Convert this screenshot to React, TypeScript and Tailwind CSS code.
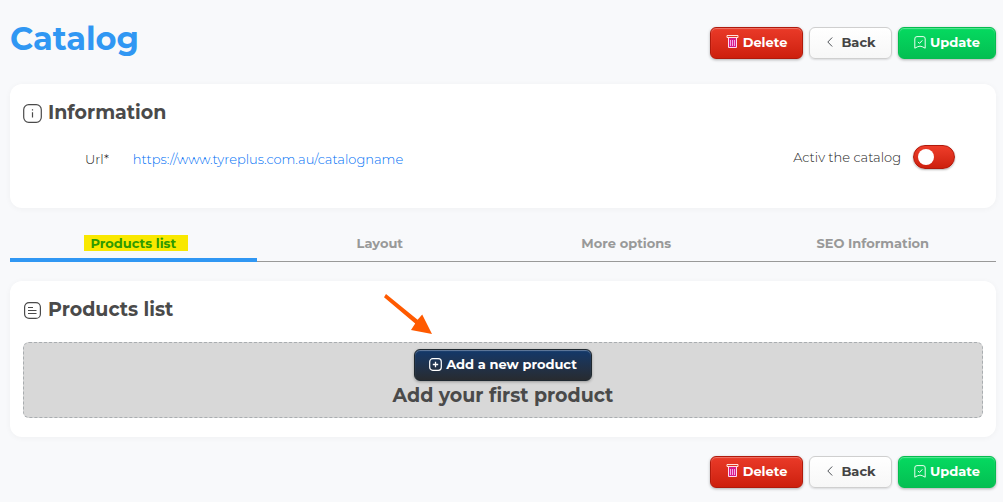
import React from 'react';

type IconProps = { className?: string };

const TrashIcon: React.FC<IconProps> = ({ className }) => (
  <svg viewBox="0 0 13 14" fill="none" className={className} aria-hidden="true">
    <path d="M2.5 3v9.5h8V3" fill="#d81b8c" stroke="#ffd9f2" />
    <path d="M1 .5h11v2H1z" stroke="#ffe3dc" />
    <path d="M4.5 5v6M6.5 5v6M8.5 5v6" stroke="#f6b8ee" strokeWidth=".9" />
  </svg>
);

const ChevronIcon: React.FC<IconProps> = ({ className }) => (
  <svg viewBox="0 0 6 10" fill="none" className={className} aria-hidden="true">
    <path d="M5.2.5.8 5l4.4 4.5" stroke="#4f5358" />
  </svg>
);

const BookmarkIcon: React.FC<IconProps> = ({ className }) => (
  <svg viewBox="0 0 12 13" fill="none" className={className} aria-hidden="true">
    <path
      d="M3 .6h6A2.2 2.2 0 0 1 11.2 3v9.2L8.5 10.8a5.3 5.3 0 0 0-5 0L.8 12.2V3A2.2 2.2 0 0 1 3 .6Z"
      stroke="#eaffef"
    />
    <path d="m4 5.9 1.5 1.5 2.8-3" stroke="#fff" />
  </svg>
);

const PlusIcon: React.FC<IconProps> = ({ className }) => (
  <svg viewBox="0 0 13 13" fill="none" stroke="#fff" className={className} aria-hidden="true">
    <rect x=".7" y=".7" width="11.6" height="11.6" rx="3" strokeWidth="1.2" />
    <path d="M6.5 3.8v5.4M3.8 6.5h5.4" strokeWidth="1.3" />
  </svg>
);

const InfoIcon: React.FC<IconProps> = ({ className }) => (
  <svg viewBox="0 0 19 19" fill="none" stroke="#4a4a4a" className={className} aria-hidden="true">
    <rect x=".7" y=".7" width="17.6" height="17.6" rx="5" strokeWidth="1.2" />
    <path d="M9.5 8.2v5.4M9.5 5.3v1.3" strokeWidth="1.2" />
  </svg>
);

const ListIcon: React.FC<IconProps> = ({ className }) => (
  <svg viewBox="0 0 19 19" fill="none" stroke="#4a4a4a" className={className} aria-hidden="true">
    <rect x="1.6" y="1.6" width="15.8" height="15.8" rx="4.5" strokeWidth="1.2" />
    <path d="M5 6.5h5M5 9.5h8.5M5 12.5h8.5" strokeWidth="1.1" />
  </svg>
);

const BUTTON =
  'flex h-8 cursor-pointer items-center justify-center gap-1 rounded-md border pb-0.5 text-[13px] leading-5 font-bold';

const Actions: React.FC = () => (
  <div className="flex shrink-0 gap-1.5">
    <button
      type="button"
      className={`${BUTTON} w-[93px] border-[#b01a0c] bg-linear-to-b from-[#ea3a28] to-[#cd1f0c] text-white shadow-[inset_0_1px_1px_rgba(255,255,255,0.3),0_1px_3px_rgba(0,0,0,0.3)]`}
    >
      <TrashIcon className="h-3.5 w-[13px]" />
      Delete
    </button>
    <button
      type="button"
      className={`${BUTTON} w-[83px] border-[#cfcfcf] bg-linear-to-b from-white to-[#f7f7f7] pl-0.5 text-[#444] shadow-[0_1px_2px_rgba(0,0,0,0.12)]`}
    >
      <ChevronIcon className="mr-1 h-2.5 w-1.5" />
      Back
    </button>
    <button
      type="button"
      className={`${BUTTON} w-[98px] border-[#05bd4f] bg-linear-to-b from-[#05da60] to-[#04bf52] text-white shadow-[inset_0_1px_1px_rgba(255,255,255,0.35),0_1px_3px_rgba(0,0,0,0.3)]`}
    >
      <BookmarkIcon className="h-[13px] w-3" />
      Update
    </button>
  </div>
);

const tabs = ['Products list', 'Layout', 'More options', 'SEO Information'];

const CARD = 'rounded-xl bg-white px-[13px] pt-4 shadow-[0_1px_6px_rgba(0,0,0,0.04)]';

const App: React.FC = () => {
  const [activeTab, setActiveTab] = React.useState(tabs[0]);
  const [active, setActive] = React.useState(false);

  return (
    <div className="min-h-screen bg-[#f8f9fb] pr-[7px] pb-3.5 pl-2.5 font-['Montserrat','Inter',sans-serif] text-[13px] leading-5 text-[#4a4a4a]">
      <header className="flex justify-between pt-[18px] pb-[25px]">
        <h1 className="text-[32px] leading-[41px] font-bold text-[#3097f3]">Catalog</h1>
        <div className="pt-[9px]">
          <Actions />
        </div>
      </header>

      <section className={`${CARD} pb-[39px]`}>
        <h2 className="flex items-center gap-1.5 text-[19px] leading-[26px] font-bold">
          <InfoIcon className="size-[19px]" />
          Information
        </h2>
        <div className="mt-[19px] flex h-6 justify-between pr-7 pl-[62px] font-light text-[#222]">
          <div className="flex items-end gap-6">
            <span>Url*</span>
            <a href="https://www.tyreplus.com.au/catalogname" className="text-[#0070f5]">
              https://www.tyreplus.com.au/catalogname
            </a>
          </div>
          <label className="flex items-center gap-3">
            Activ the catalog
            <input
              type="checkbox"
              role="switch"
              checked={active}
              onChange={(e) => setActive(e.target.checked)}
              className="flex h-6 w-[42px] cursor-pointer appearance-none items-center rounded-full border border-[#b01a0c] bg-linear-to-b from-[#ee3d2a] to-[#cd1f0c] px-1 shadow-[0_1px_2px_rgba(0,0,0,0.3)] before:size-4 before:rounded-full before:bg-white checked:justify-end checked:border-[#05bd4f] checked:from-[#05da60] checked:to-[#04bf52]"
            />
          </label>
        </div>
      </section>

      <div role="tablist" className="mt-4 grid grid-cols-4 border-b border-[#999]">
        {tabs.map((tab) => (
          <button
            key={tab}
            type="button"
            role="tab"
            aria-selected={tab === activeTab}
            onClick={() => setActiveTab(tab)}
            className={`-mb-px flex h-[38px] cursor-pointer items-center justify-center border-b-4 pt-1 font-bold ${
              tab === activeTab ? 'border-[#3097f3] text-[#2f9a00]' : 'border-transparent text-[#999]'
            }`}
          >
            <span className={tab === activeTab ? '-mr-1.5 bg-[#f9e800] pr-3 pl-1.5 leading-4' : 'leading-4'}>
              {tab}
            </span>
          </button>
        ))}
      </div>

      <section className={`${CARD} mt-[19px] pb-[19px]`}>
        <h2 className="flex items-center gap-1.5 text-[19px] leading-[26px] font-bold">
          <ListIcon className="size-[19px]" />
          Products list
        </h2>
        <div className="mt-[19px] flex flex-col items-center rounded-md border border-dashed border-[#a9adb0] bg-[#d8d8d8] py-1.5">
          <div className="relative">
            <button
              type="button"
              className={`${BUTTON} w-[178px] border-[#202930] bg-linear-to-b from-[#12386b] to-[#272b30] text-white shadow-[inset_0_1px_1px_rgba(255,255,255,0.35),0_1px_3px_rgba(0,0,0,0.3)]`}
            >
              <PlusIcon className="size-[13px]" />
              Add a new product
            </button>
            {/* Pointer to the first step */}
            <svg
              viewBox="0 0 48 40"
              fill="#ff5a00"
              className="pointer-events-none absolute -top-[55px] -left-[30px] h-10 w-12"
              aria-hidden="true"
            >
              <path d="M2 0 33.6 25.8 38.2 20.4 48 40 27 36 31.2 29.4 0 3.2Z" />
            </svg>
          </div>
          <h3 className="text-[19px] leading-[30px] font-bold">Add your first product</h3>
        </div>
      </section>

      <footer className="mt-[19px] flex justify-end">
        <Actions />
      </footer>
    </div>
  );
};

export default App;
